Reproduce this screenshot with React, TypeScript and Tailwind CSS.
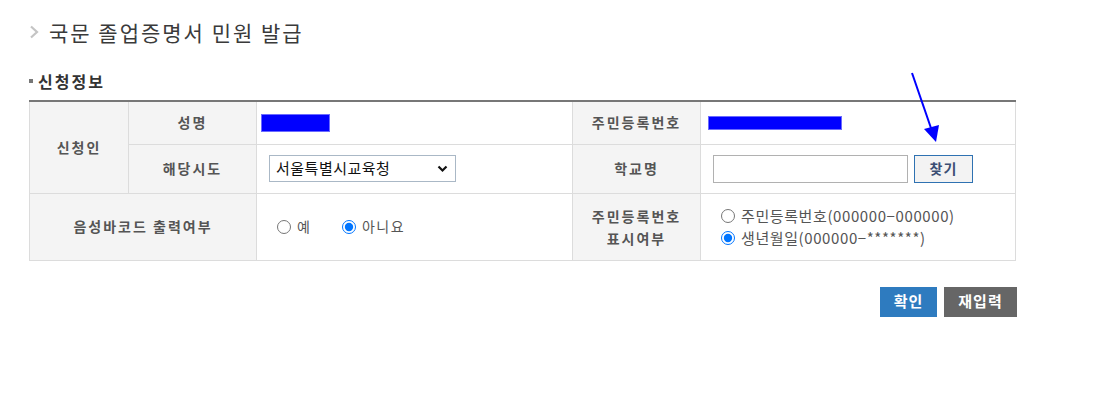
import React from "react";

const th =
  "border border-[#dcdcdc] bg-[#f4f4f4] text-center text-[14px] font-bold tracking-[2px] text-[#555]";
const td = "border border-[#dcdcdc] bg-white px-3 text-[14px] text-[#555]";

export default function App() {
  return (
    <div className="relative min-h-[402px] w-[1102px] bg-white font-['Noto_Sans_CJK_KR','Noto_Sans',sans-serif] text-[#333]">
      {/* page title */}
      <div className="flex items-center pl-[29px] pt-[17px]">
        <svg width="10" height="14" viewBox="0 0 10 14" className="mr-[10px]">
          <polyline points="2,1.5 8,7 2,12.5" fill="none" stroke="#c4c4c4" strokeWidth="2.2" />
        </svg>
        <h1 className="text-[21px] leading-[30px] tracking-[2px] text-[#3a3a3a]">
          국문 졸업증명서 민원 발급
        </h1>
      </div>

      {/* section */}
      <div className="mt-[24px] flex items-center pl-[29px]">
        <span className="mr-[5px] h-[4px] w-[4px] bg-[#777]" />
        <h2 className="text-[16px] font-bold leading-[20px] tracking-[2px] text-[#333]">신청정보</h2>
      </div>

      <table className="ml-[29px] mt-[9px] w-[987px] table-fixed border-collapse border-t-2 border-t-[#777]">
        <colgroup>
          <col className="w-[99px]" />
          <col className="w-[128px]" />
          <col className="w-[316px]" />
          <col className="w-[128px]" />
          <col />
        </colgroup>
        <tbody>
          <tr className="h-[43px]">
            <th rowSpan={2} className={th}>
              신청인
            </th>
            <th className={th}>성명</th>
            <td className={td}>
              <div className="ml-[-8px] h-[18px] w-[69px] border border-[#6b6bff] bg-[#0000ff]" />
            </td>
            <th className={th}>주민등록번호</th>
            <td className={td}>
              <div className="ml-[-5px] h-[14px] w-[134px] border border-[#6b6bff] bg-[#0000ff]" />
            </td>
          </tr>
          <tr className="h-[49px]">
            <th className={th}>해당시도</th>
            <td className={td}>
              <div className="relative w-[187px]">
                <select
                  defaultValue="seoul"
                  className="h-[27px] w-[187px] appearance-none border border-[#aab8c6] bg-white pl-[6px] text-[15px] tracking-[0.5px] text-[#111]"
                >
                  <option value="seoul">서울특별시교육청</option>
                </select>
                <svg
                  className="pointer-events-none absolute right-[8px] top-[10px]"
                  width="11"
                  height="8"
                  viewBox="0 0 11 8"
                >
                  <polyline points="1.5,1.5 5.5,5.5 9.5,1.5" fill="none" stroke="#111" strokeWidth="2.2" />
                </svg>
              </div>
            </td>
            <th className={th}>학교명</th>
            <td className={td}>
              <div className="flex items-center">
                <input type="text" className="h-[28px] w-[195px] border border-[#b1b1b1] bg-white" />
                <button className="ml-[6px] h-[28px] w-[59px] border border-[#2f72b2] bg-[#f3f3f3] text-[14px] font-bold tracking-[1px] text-[#3c4f73]">
                  찾기
                </button>
              </div>
            </td>
          </tr>
          <tr className="h-[67px]">
            <th colSpan={2} className={th}>
              음성바코드 출력여부
            </th>
            <td className={td}>
              <div className="ml-[8px] flex items-center">
                <label className="flex items-center">
                  <input type="radio" name="barcode" className="m-0 h-[14px] w-[14px]" />
                  <span className="ml-[6px]">예</span>
                </label>
                <label className="ml-[32px] flex items-center">
                  <input type="radio" name="barcode" defaultChecked className="m-0 h-[14px] w-[14px]" />
                  <span className="ml-[6px] tracking-[1.5px]">아니요</span>
                </label>
              </div>
            </td>
            <th className={`${th} leading-[22px]`}>
              주민등록번호
              <br />
              표시여부
            </th>
            <td className={td}>
              <div className="ml-[8px] flex flex-col gap-[5px] text-[15px] leading-[17px] tracking-[0.6px]">
                <label className="flex items-center">
                  <input type="radio" name="rrn" className="m-0 h-[14px] w-[14px]" />
                  <span className="ml-[6px]">주민등록번호(000000−000000)</span>
                </label>
                <label className="flex items-center">
                  <input type="radio" name="rrn" defaultChecked className="m-0 h-[14px] w-[14px]" />
                  <span className="ml-[6px]">생년월일(000000−*******)</span>
                </label>
              </div>
            </td>
          </tr>
        </tbody>
      </table>

      <div className="mt-[26px] flex w-[1017px] justify-end gap-[7px]">
        <button className="h-[30px] w-[57px] bg-[#2e7bbf] text-[15px] font-bold tracking-[1px] text-white">
          확인
        </button>
        <button className="h-[30px] w-[73px] bg-[#666] text-[15px] font-bold tracking-[1px] text-white">
          재입력
        </button>
      </div>

      {/* annotation arrow */}
      <svg className="absolute left-[900px] top-[65px]" width="50" height="85" viewBox="0 0 50 85">
        <line x1="12" y1="8" x2="32" y2="66" stroke="#0000ff" strokeWidth="2" />
        <polygon points="36,77 24,64 39,60" fill="#0000ff" />
      </svg>
    </div>
  );
}
